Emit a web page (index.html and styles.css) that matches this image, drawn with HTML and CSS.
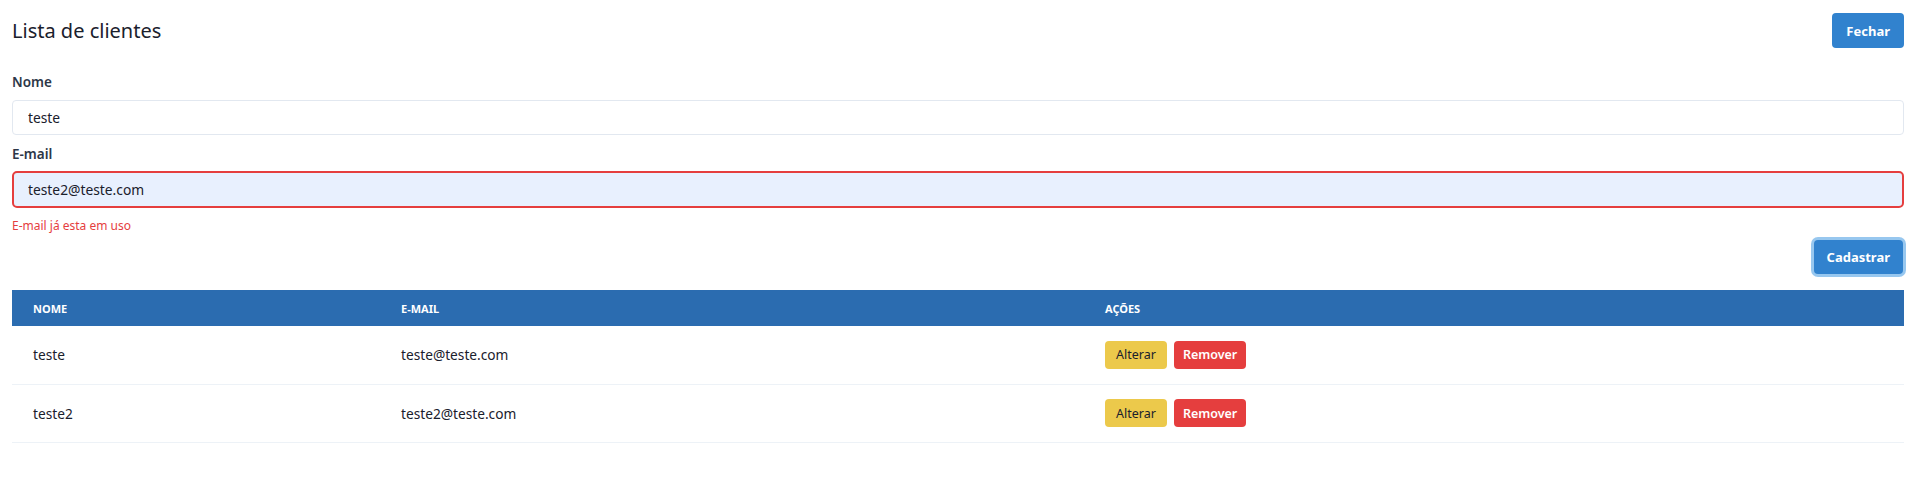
FILE: index.html
```html
<!DOCTYPE html>
<html lang="pt-BR">
<head>
<meta charset="utf-8">
<title>Lista de clientes</title>
<link rel="stylesheet" href="styles.css">
</head>
<body>
<div class="page">
  <header class="header">
    <h1 class="title">Lista de clientes</h1>
    <button class="btn btn-blue">Fechar</button>
  </header>
  <form class="form">
    <div class="field">
      <label class="label">Nome</label>
      <input class="input" type="text" value="teste">
    </div>
    <div class="field">
      <label class="label">E-mail</label>
      <input class="input input-error" type="text" value="teste2@teste.com">
      <p class="error">E-mail já esta em uso</p>
    </div>
    <div class="actions">
      <button type="button" class="btn btn-blue btn-focus">Cadastrar</button>
    </div>
  </form>
  <table class="table">
    <thead>
      <tr>
        <th class="col-name">Nome</th>
        <th class="col-email">E-mail</th>
        <th>Ações</th>
      </tr>
    </thead>
    <tbody>
      <tr>
        <td>teste</td>
        <td>teste@teste.com</td>
        <td><div class="row-actions"><button class="sbtn sbtn-yellow">Alterar</button><button class="sbtn sbtn-red">Remover</button></div></td>
      </tr>
      <tr>
        <td>teste2</td>
        <td>teste2@teste.com</td>
        <td><div class="row-actions"><button class="sbtn sbtn-yellow">Alterar</button><button class="sbtn sbtn-red">Remover</button></div></td>
      </tr>
    </tbody>
  </table>
</div>
</body>
</html>
```
FILE: styles.css
```css
* { box-sizing: border-box; }
html, body { margin: 0; padding: 0; background: #fff; }
body {
  font-family: "Noto Sans", "Open Sans", sans-serif;
  color: #1a202c;
  font-size: 14px;
}
.page { padding: 13px 12px 0 12px; }
.header {
  display: flex;
  justify-content: space-between;
  align-items: center;
  height: 35px;
}
.title {
  margin: 0;
  font-size: 20px;
  font-weight: 400;
  line-height: 28px;
  color: #1a202c;
}
.btn {
  border: 0;
  border-radius: 4px;
  font-family: inherit;
  font-weight: 700;
  font-size: 13px;
  color: #fff;
  padding: 0 14px;
  height: 35px;
}
.btn-blue { background: #3182ce; }
.btn-focus {
  box-shadow: 0 0 0 3px rgba(66, 153, 225, 0.55);
  height: 34px;
  padding: 0 13px;
}
.form { margin-top: 24px; }
.field { display: flex; flex-direction: column; }
.label {
  font-size: 13.5px;
  font-weight: 600;
  color: #2d3748;
  line-height: 20px;
  margin-bottom: 8px;
}
.field + .field .label { margin-top: 9px; margin-bottom: 7px; }
.input {
  height: 35px;
  border: 1px solid #e2e8f0;
  border-radius: 4px;
  padding: 0 15px;
  font-family: inherit;
  font-size: 13.8px;
  color: #1a202c;
  background: #fff;
  outline: none;
}
.input-error {
  height: 37px;
  border: 2px solid #e53e3e;
  padding: 0 14px;
  background: #e8f0fe;
  border-radius: 5px;
}
.error {
  margin: 10px 0 0 0;
  font-size: 12px;
  line-height: 16px;
  color: #e53e3e;
}
.actions {
  display: flex;
  justify-content: flex-end;
  margin-top: 6px;
  padding-right: 1px;
}
.table {
  width: 100%;
  border-collapse: collapse;
  margin-top: 16px;
  font-size: 13.7px;
}
.table thead tr { background: #2b6cb0; }
.table th {
  height: 36px;
  text-align: left;
  color: #fff;
  font-size: 11px;
  font-weight: 700;
  text-transform: uppercase;
  padding: 0 21px;
}
.col-name { width: 368px; }
.col-email { width: 704px; }
.table td {
  height: 58px;
  padding: 0 21px;
  border-bottom: 1px solid #edf2f7;
  color: #1a202c;
}
.row-actions { display: flex; gap: 7px; }
.sbtn {
  border: 0;
  border-radius: 4px;
  height: 28px;
  font-family: inherit;
  font-size: 12.5px;
  padding: 0 11px;
}
.sbtn-yellow { background: #ecc94b; color: #1a202c; font-weight: 400; }
.sbtn-red { background: #e53e3e; color: #fff; font-weight: 600; padding: 0 9px; }
```
